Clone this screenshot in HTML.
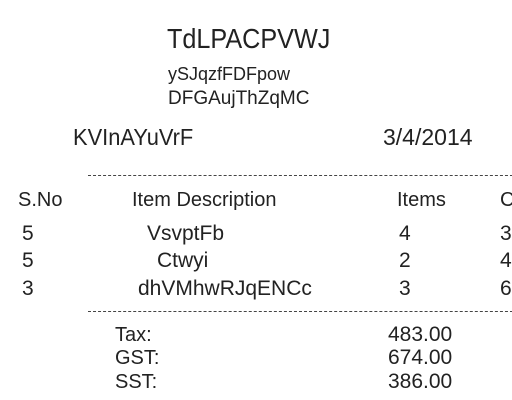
<html><head><style>
body{margin:0;width:512px;height:400px;background:#fff;overflow:hidden;position:relative;font-family:"Liberation Sans","DejaVu Sans",sans-serif;color:#222;}
div{position:absolute;white-space:nowrap;line-height:1;}
.d{left:88px;width:430px;border-top:1px dashed #444;height:0;}
</style></head><body>
<div style="left:167px;top:25px;font-size:28px;transform:scaleX(0.9);transform-origin:left">TdLPACPVWJ</div>
<div style="left:168px;top:65px;font-size:18px;">ySJqzfFDFpow</div>
<div style="left:168px;top:89px;font-size:19px;">DFGAujThZqMC</div>
<div style="left:73px;top:126px;font-size:23px;transform:scaleX(0.95);transform-origin:left">KVInAYuVrF</div>
<div style="left:383px;top:126px;font-size:23px;">3/4/2014</div>
<div class="d" style="top:175px"></div>
<div style="left:18px;top:190px;font-size:20px;">S.No</div>
<div style="left:132px;top:190px;font-size:20px;">Item Description</div>
<div style="left:397px;top:190px;font-size:20px;">Items</div>
<div style="left:500px;top:190px;font-size:20px;">C</div>
<div style="left:22px;top:223px;font-size:21px;">5</div>
<div style="left:147px;top:223px;font-size:21px;">VsvptFb</div>
<div style="left:399px;top:223px;font-size:21px;">4</div>
<div style="left:500px;top:223px;font-size:21px;">3</div>
<div style="left:22px;top:250px;font-size:21px;">5</div>
<div style="left:157px;top:250px;font-size:21px;">Ctwyi</div>
<div style="left:399px;top:250px;font-size:21px;">2</div>
<div style="left:500px;top:250px;font-size:21px;">4</div>
<div style="left:22px;top:278px;font-size:21px;">3</div>
<div style="left:138px;top:278px;font-size:21px;">dhVMhwRJqENCc</div>
<div style="left:399px;top:278px;font-size:21px;">3</div>
<div style="left:500px;top:278px;font-size:21px;">6</div>
<div class="d" style="top:311px"></div>
<div style="left:115px;top:325px;font-size:20px;">Tax:</div>
<div style="left:388px;top:324px;font-size:21px;">483.00</div>
<div style="left:115px;top:348px;font-size:20px;">GST:</div>
<div style="left:388px;top:347px;font-size:21px;">674.00</div>
<div style="left:115px;top:372px;font-size:20px;">SST:</div>
<div style="left:388px;top:371px;font-size:21px;">386.00</div>
</body></html>
